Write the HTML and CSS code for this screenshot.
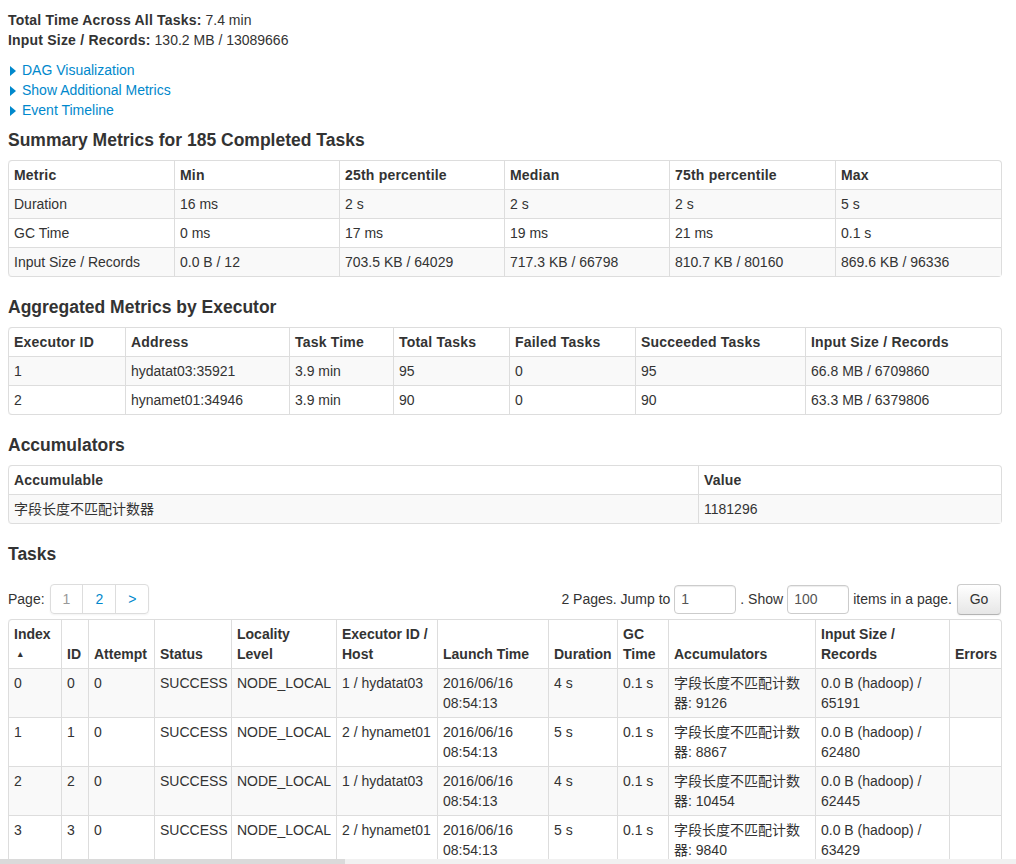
FILE: index.html
```html
<!DOCTYPE html>
<html>
<head>
<meta charset="utf-8">
<title>Stage Details</title>
<link rel="stylesheet" href="styles.css">
</head>
<body>
<div class="container">
  <ul class="stats">
    <li><strong>Total Time Across All Tasks:</strong> 7.4 min</li>
    <li><strong>Input Size / Records:</strong> 130.2 MB / 13089666</li>
  </ul>

  <ul class="toggles">
    <li><a href="#"><span class="arrow"></span>DAG Visualization</a></li>
    <li><a href="#"><span class="arrow"></span>Show Additional Metrics</a></li>
    <li><a href="#"><span class="arrow"></span>Event Timeline</a></li>
  </ul>

  <h4>Summary Metrics for 185 Completed Tasks</h4>
  <table class="grid">
    <colgroup>
      <col class="s1"><col class="s2"><col class="s3"><col class="s4"><col class="s5"><col class="s6">
    </colgroup>
    <thead>
      <tr><th>Metric</th><th>Min</th><th>25th percentile</th><th>Median</th><th>75th percentile</th><th>Max</th></tr>
    </thead>
    <tbody>
      <tr><td>Duration</td><td>16 ms</td><td>2 s</td><td>2 s</td><td>2 s</td><td>5 s</td></tr>
      <tr><td>GC Time</td><td>0 ms</td><td>17 ms</td><td>19 ms</td><td>21 ms</td><td>0.1 s</td></tr>
      <tr><td>Input Size / Records</td><td>0.0 B / 12</td><td>703.5 KB / 64029</td><td>717.3 KB / 66798</td><td>810.7 KB / 80160</td><td>869.6 KB / 96336</td></tr>
    </tbody>
  </table>

  <h4>Aggregated Metrics by Executor</h4>
  <table class="grid">
    <colgroup>
      <col class="e1"><col class="e2"><col class="e3"><col class="e4"><col class="e5"><col class="e6"><col class="e7">
    </colgroup>
    <thead>
      <tr><th>Executor ID</th><th>Address</th><th>Task Time</th><th>Total Tasks</th><th>Failed Tasks</th><th>Succeeded Tasks</th><th>Input Size / Records</th></tr>
    </thead>
    <tbody>
      <tr><td>1</td><td>hydatat03:35921</td><td>3.9 min</td><td>95</td><td>0</td><td>95</td><td>66.8 MB / 6709860</td></tr>
      <tr><td>2</td><td>hynamet01:34946</td><td>3.9 min</td><td>90</td><td>0</td><td>90</td><td>63.3 MB / 6379806</td></tr>
    </tbody>
  </table>

  <h4>Accumulators</h4>
  <table class="grid">
    <colgroup>
      <col class="a1"><col class="a2">
    </colgroup>
    <thead>
      <tr><th>Accumulable</th><th>Value</th></tr>
    </thead>
    <tbody>
      <tr><td class="cjk">字段长度不匹配计数器</td><td>1181296</td></tr>
    </tbody>
  </table>

  <h4>Tasks</h4>
  <div class="pager-row">
    <div class="pager-left">
      <span class="page-label">Page:</span>
      <ul class="pagination">
        <li class="active"><a href="#">1</a></li>
        <li><a href="#">2</a></li>
        <li><a href="#">&gt;</a></li>
      </ul>
    </div>
    <form class="pager-form">
      <span>2 Pages. Jump to</span>
      <input class="pg-input" type="text" value="1">
      <span>. Show</span>
      <input class="pg-input" type="text" value="100">
      <span>items in a page.</span>
      <button class="btn" type="button">Go</button>
    </form>
  </div>

  <table class="grid tasks">
    <colgroup>
      <col class="t1"><col class="t2"><col class="t3"><col class="t4"><col class="t5"><col class="t6">
      <col class="t7"><col class="t8"><col class="t9"><col class="t10"><col class="t11"><col class="t12">
    </colgroup>
    <thead>
      <tr>
        <th>Index<br><span class="sort">&#x25B4;</span></th>
        <th>ID</th>
        <th>Attempt</th>
        <th>Status</th>
        <th>Locality<br>Level</th>
        <th>Executor ID /<br>Host</th>
        <th>Launch Time</th>
        <th>Duration</th>
        <th>GC<br>Time</th>
        <th>Accumulators</th>
        <th>Input Size /<br>Records</th>
        <th>Errors</th>
      </tr>
    </thead>
    <tbody>
      <tr>
        <td>0</td><td>0</td><td>0</td><td>SUCCESS</td><td>NODE_LOCAL</td><td>1 / hydatat03</td>
        <td>2016/06/16 08:54:13</td><td>4 s</td><td>0.1 s</td><td class="cjk">字段长度不匹配计数器: 9126</td><td>0.0 B (hadoop) / 65191</td><td></td>
      </tr>
      <tr>
        <td>1</td><td>1</td><td>0</td><td>SUCCESS</td><td>NODE_LOCAL</td><td>2 / hynamet01</td>
        <td>2016/06/16 08:54:13</td><td>5 s</td><td>0.1 s</td><td class="cjk">字段长度不匹配计数器: 8867</td><td>0.0 B (hadoop) / 62480</td><td></td>
      </tr>
      <tr>
        <td>2</td><td>2</td><td>0</td><td>SUCCESS</td><td>NODE_LOCAL</td><td>1 / hydatat03</td>
        <td>2016/06/16 08:54:13</td><td>4 s</td><td>0.1 s</td><td class="cjk">字段长度不匹配计数器: 10454</td><td>0.0 B (hadoop) / 62445</td><td></td>
      </tr>
      <tr>
        <td>3</td><td>3</td><td>0</td><td>SUCCESS</td><td>NODE_LOCAL</td><td>2 / hynamet01</td>
        <td>2016/06/16 08:54:13</td><td>5 s</td><td>0.1 s</td><td class="cjk">字段长度不匹配计数器: 9840</td><td>0.0 B (hadoop) / 63429</td><td></td>
      </tr>
    </tbody>
  </table>
</div>
<div class="hscroll"><div class="hscroll-thumb"></div></div>
</body>
</html>
```

FILE: styles.css
```css
html, body {
  margin: 0;
  padding: 0;
  background: #fff;
}

body {
  font-family: "Liberation Sans", Arial, "Noto Sans CJK SC", sans-serif;
  font-size: 14px;
  line-height: 20px;
  color: #333;
  overflow: hidden;
}

.container {
  width: 993px;
  padding: 10px 15px 0 8px;
}

ul {
  list-style: none;
  margin: 0;
  padding: 0;
}

a {
  color: #0088cc;
  text-decoration: none;
}

.stats strong {
  font-weight: bold;
  letter-spacing: 0.2px;
}

.toggles {
  margin-top: 10px;
}

.arrow {
  display: inline-block;
  width: 0;
  height: 0;
  border-top: 5px solid transparent;
  border-bottom: 5px solid transparent;
  border-left: 6px solid #0088cc;
  margin: 0 6px 0 2px;
  vertical-align: -1px;
}

h4 {
  font-size: 17.5px;
  line-height: 20px;
  font-weight: bold;
  margin: 10px 0;
  color: #333;
}

.grid {
  width: 993px;
  table-layout: fixed;
  border-collapse: separate;
  border-spacing: 0;
  border: 1px solid #ddd;
  border-left: 0;
  border-radius: 4px;
  margin: 0 0 20px 0;
}

.grid th,
.grid td {
  padding: 4px 5px;
  line-height: 20px;
  text-align: left;
  vertical-align: top;
  border-left: 1px solid #ddd;
  border-top: 1px solid #ddd;
}

.grid thead tr:first-child th {
  border-top: 0;
}

.grid th {
  font-weight: bold;
  letter-spacing: 0.2px;
  vertical-align: bottom;
}

.grid tbody tr:nth-child(odd) td {
  background: #f9f9f9;
}

.grid thead tr:first-child th:first-child {
  border-top-left-radius: 4px;
}

.grid tbody tr:last-child td:first-child {
  border-bottom-left-radius: 4px;
}

.cjk {
  font-family: "Liberation Sans", Arial, "Noto Sans CJK SC", sans-serif;
}

/* summary metrics columns */
.s1 { width: 166px; }
.s2 { width: 165px; }
.s3 { width: 165px; }
.s4 { width: 165px; }
.s5 { width: 166px; }
.s6 { width: 166px; }

/* executor columns */
.e1 { width: 117px; }
.e2 { width: 164px; }
.e3 { width: 104px; }
.e4 { width: 116px; }
.e5 { width: 126px; }
.e6 { width: 170px; }
.e7 { width: 196px; }

/* accumulators */
.a1 { width: 690px; }
.a2 { width: 303px; }

/* tasks */
.t1 { width: 53px; }
.t2 { width: 27px; }
.t3 { width: 66px; }
.t4 { width: 77px; }
.t5 { width: 105px; }
.t6 { width: 101px; }
.t7 { width: 111px; }
.t8 { width: 69px; }
.t9 { width: 51px; }
.t10 { width: 147px; }
.t11 { width: 134px; }
.t12 { width: 52px; }

.tasks th {
  letter-spacing: 0;
}

.sort {
  font-size: 9px;
  line-height: 20px;
  vertical-align: top;
  margin-left: 4px;
}

/* pager */
.pager-row {
  display: flex;
  justify-content: space-between;
  align-items: flex-start;
  margin-top: 20px;
  height: 35px;
}

.pager-left {
  display: flex;
  align-items: center;
  height: 30px;
}

.page-label {
  margin-right: 5px;
}

.pagination {
  display: flex;
  border: 1px solid #ddd;
  border-radius: 4px;
  box-shadow: 0 1px 2px rgba(0, 0, 0, 0.05);
}

.pagination li a {
  display: block;
  padding: 4px 12px;
  line-height: 20px;
  border-left: 1px solid #ddd;
}

.pagination li:first-child a {
  border-left: 0;
}

.pagination li.active a {
  color: #999;
}

.pager-form {
  display: flex;
  align-items: center;
  height: 30px;
  margin: 0;
}

.pg-input {
  width: 48px;
  height: 19px;
  padding: 4px 6px;
  margin: 0 4px;
  font-family: "Liberation Sans", Arial, sans-serif;
  font-size: 14px;
  line-height: 20px;
  color: #555;
  border: 1px solid #ccc;
  border-radius: 4px;
  box-shadow: inset 0 1px 1px rgba(0, 0, 0, 0.075);
}

.btn {
  margin-left: 5px;
  width: 44px;
  height: 31px;
  padding: 4px 0;
  font-family: "Liberation Sans", Arial, sans-serif;
  font-size: 14px;
  line-height: 20px;
  color: #333;
  background: linear-gradient(#ffffff, #e6e6e6);
  border: 1px solid #ccc;
  border-bottom-color: #b3b3b3;
  border-radius: 4px;
  box-shadow: inset 0 1px 0 rgba(255, 255, 255, 0.2), 0 1px 2px rgba(0, 0, 0, 0.05);
}

.hscroll {
  position: fixed;
  left: 0;
  right: 0;
  bottom: 0;
  height: 5px;
  background: #f1f1f1;
}

.hscroll-thumb {
  width: 345px;
  height: 5px;
  background: #dadada;
}
```
